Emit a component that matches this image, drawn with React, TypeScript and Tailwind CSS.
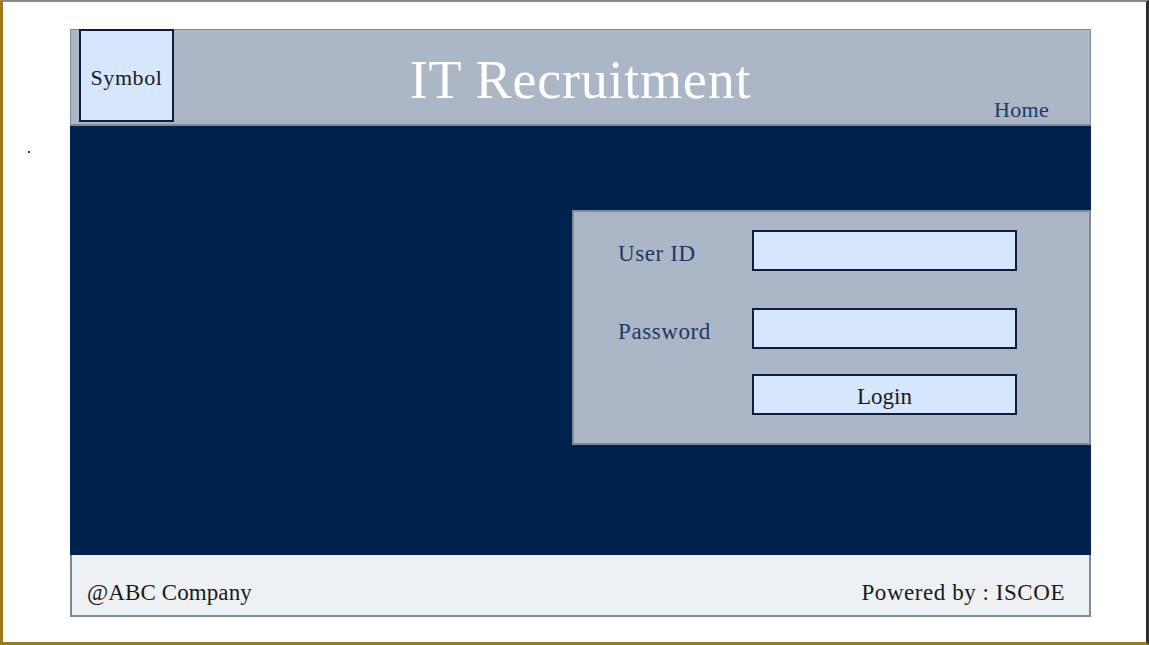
import React from "react";

const serif = { fontFamily: '"Liberation Serif", "Times New Roman", serif' };

const Field = ({ label }: { label: string }) => (
  <div className="flex items-center h-[41px]">
    <span className="w-[134px] pt-[8px] text-[23px] tracking-[0.6px] text-[#1f3864]">{label}</span>
    <div className="w-[265px] h-[41px] bg-[#d6e6fc] border-2 border-[#101c3c]" />
  </div>
);

const App = () => {
  return (
    <div
      className="relative w-[1149px] h-[645px] bg-white border-l-[3px] border-l-[#9c7a14] border-b-[3px] border-b-[#9c7a14] border-r-[3px] border-r-[#2e2e2e] border-t-2 border-t-[#8a8a8a] pl-[67px] pt-[27px] overflow-hidden"
      style={serif}
    >
      <span className="absolute left-[25px] top-[149px] w-[2px] h-[2px] bg-[#1a2cff]" />

      <div className="w-[1021px] flex flex-col">
        {/* header */}
        <div className="grid grid-cols-[1fr_auto_1fr] h-[97px] bg-[#abb6c6] border border-[#7f8a97] border-b-2">
          <div className="pl-[8px]">
            <div className="w-[95px] h-[93px] -mt-px bg-[#d6e6fc] border-2 border-[#101c3c] flex items-center justify-center pt-[4px] text-[22px] tracking-[0.6px] text-[#1a1a1a]">
              Symbol
            </div>
          </div>
          <h1 className="pt-[23px] text-[54px] leading-none text-white tracking-[0.8px]">
            IT Recruitment
          </h1>
          <div className="flex items-end justify-end pr-[41px]">
            <span className="-mb-[2px] text-[22px] tracking-[0.3px] text-[#1f3864]">Home</span>
          </div>
        </div>

        {/* body */}
        <div className="h-[429px] bg-[#00224f] flex justify-end items-start pt-[84px]">
          <div className="w-[519px] h-[235px] bg-[#abb6c6] border-2 border-[#7f8a97] pt-[18px] pl-[44px] flex flex-col">
            <Field label="User ID" />
            <div className="mt-[37px]">
              <Field label="Password" />
            </div>
            <div className="mt-[25px] ml-[134px] w-[265px] h-[41px] bg-[#d6e6fc] border-2 border-[#101c3c] flex items-center justify-center pt-[5px] text-[23px] text-[#1a1a1a]">
              Login
            </div>
          </div>
        </div>

        {/* footer */}
        <div className="h-[62px] bg-[#eef1f4] border-2 border-t-0 border-[#7f8a97] flex items-center justify-between pl-[15px] pr-[24px] pt-[16px] text-[23px] text-[#1a1a1a]">
          <span className="tracking-[0.1px]">@ABC Company</span>
          <span className="tracking-[0.55px]">Powered by : ISCOE</span>
        </div>
      </div>
    </div>
  );
};

export default App;
